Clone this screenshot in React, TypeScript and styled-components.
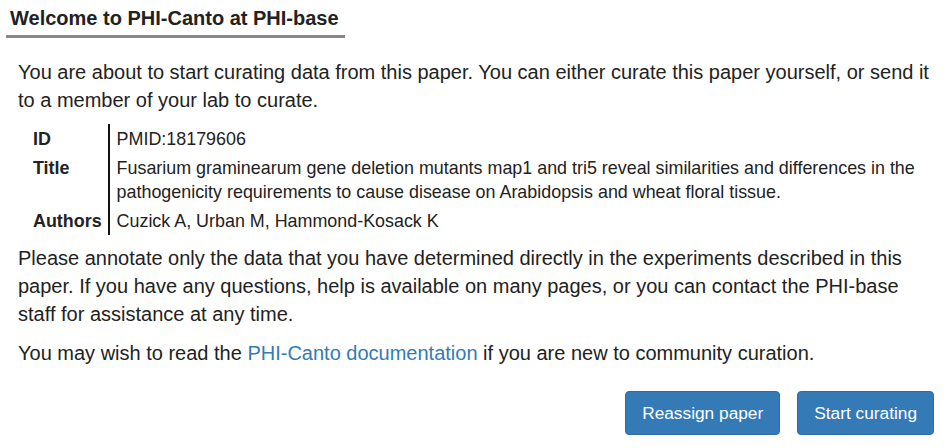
import React from "react";
import styled, { createGlobalStyle } from "styled-components";

const Global = createGlobalStyle`
  html, body { margin: 0; padding: 0; background: #fff; }
  body { font-family: "Liberation Sans", Arial, sans-serif; color: #222; }
`;

const Page = styled.div`
  width: 949px;
  box-sizing: border-box;
  padding: 0 15px 0 6px;
`;

const Heading = styled.h1`
  display: inline-block;
  margin: 0;
  padding: 7px 6px 6px 4px;
  font-size: 20px;
  line-height: 22px;
  font-weight: bold;
  color: #222;
  border-bottom: 3px solid #888;
`;

const Body = styled.div`
  padding: 20px 0 0 12px;
`;

const Para = styled.p<{ $gap?: number }>`
  margin: 0 0 ${(p) => p.$gap ?? 11}px;
  font-size: 20px;
  line-height: 28px;
`;

const Link = styled.a`
  color: #337ab7;
  text-decoration: none;
`;

const Details = styled.table`
  border-collapse: collapse;
  margin: 10px 0 9px 8px;
  font-size: 17.9px;
  line-height: 24px;
`;

const Label = styled.th`
  text-align: left;
  vertical-align: top;
  font-weight: bold;
  padding: 2.5px 6px 2.5px 7px;
  border-right: 2px solid #111;
`;

const Value = styled.td`
  padding: 2.5px 6px 2.5px 7px;
  vertical-align: top;
`;

const Actions = styled.div`
  display: flex;
  justify-content: flex-end;
  gap: 17px;
  margin-top: 24px;
`;

const Button = styled.button`
  font-family: "Liberation Sans", Arial, sans-serif;
  font-size: 17.3px;
  line-height: 24px;
  height: 44px;
  padding: 0 16px;
  color: #fff;
  background: #337ab7;
  border: 1px solid #2e6da4;
  border-radius: 4px;
`;

export default function App() {
  return (
    <Page>
      <Global />
      <Heading>Welcome to PHI-Canto at PHI-base</Heading>
      <Body>
        <Para $gap={8}>
          You are about to start curating data from this paper. You can either curate this paper
          yourself, or send it to a member of your lab to curate.
        </Para>
        <Details>
          <tbody>
            <tr>
              <Label>ID</Label>
              <Value>PMID:18179606</Value>
            </tr>
            <tr>
              <Label>Title</Label>
              <Value>
                Fusarium graminearum gene deletion mutants map1 and tri5 reveal similarities and
                differences in the pathogenicity requirements to cause disease on Arabidopsis and
                wheat floral tissue.
              </Value>
            </tr>
            <tr>
              <Label>Authors</Label>
              <Value>Cuzick A, Urban M, Hammond-Kosack K</Value>
            </tr>
          </tbody>
        </Details>
        <Para>
          Please annotate only the data that you have determined directly in the experiments
          described in this paper. If you have any questions, help is available on many pages, or
          you can contact the PHI-base staff for assistance at any time.
        </Para>
        <Para>
          You may wish to read the <Link href="#">PHI-Canto documentation</Link> if you are new to
          community curation.
        </Para>
        <Actions>
          <Button>Reassign paper</Button>
          <Button>Start curating</Button>
        </Actions>
      </Body>
    </Page>
  );
}
